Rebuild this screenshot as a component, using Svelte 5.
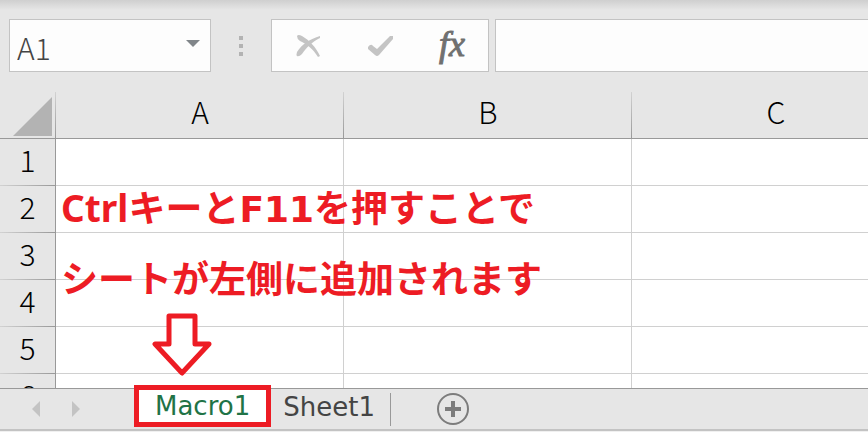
<script>
  const columns = ['A', 'B', 'C'];
  const rows = [1, 2, 3, 4, 5, 6];

  let cell = $state('A1');
  let formula = $state('');
  let active = $state('Macro1');
</script>

<main class="workbook">
  <header class="formula-bar">
    <div class="name-box">
      <input type="text" aria-label="Name box" bind:value={cell} />
      <button type="button" class="drop" aria-label="Open name list">
        <svg width="14" height="7" viewBox="0 0 14 7"><path d="M0 0h14L7 7z" fill="#808589" /></svg>
      </button>
    </div>
    <div class="grip" aria-hidden="true"><i></i><i></i><i></i></div>
    <div class="actions">
      <button type="button" aria-label="Cancel">
        <svg width="26" height="24" viewBox="0 0 26 24">
          <path d="M2 2Q2 5 5 7C12 10 18 15 23 23L25 22C21 13 14 6 7 2Q3 0 2 2z" fill="#c4c4c4" />
          <path d="M2 18C7 10 15 5 25 2L25 4C17 8 11 14 7 20Q4 23 2 22Q1 21 2 18z" fill="#c4c4c4" />
        </svg>
      </button>
      <button type="button" aria-label="Enter">
        <svg width="26" height="24" viewBox="0 0 26 24">
          <path d="M1 13Q4 9 6 12L10 15L23 2L26 2L26 5L12 21Q10 23 8 21L1 15z" fill="#c4c4c4" />
        </svg>
      </button>
      <button type="button" class="fx" aria-label="Insert function">fx</button>
    </div>
    <input class="formula" type="text" aria-label="Formula" bind:value={formula} />
  </header>

  <section class="sheet">
    <table>
      <thead>
        <tr>
          <th class="corner" aria-label="Select all">
            <svg width="39" height="39" viewBox="0 0 39 39"><path d="M39 0v39H0z" fill="#b3b3b3" /></svg>
          </th>
          {#each columns as column}
            <th scope="col">{column}</th>
          {/each}
        </tr>
      </thead>
      <tbody>
        {#each rows as row}
          <tr>
            <th scope="row">{row}</th>
            {#each columns as column}
              <td></td>
            {/each}
          </tr>
        {/each}
      </tbody>
    </table>

    <div class="note">
      <p>Ctrlキーと<span>F11</span>を押すことで</p>
      <p>シートが左側に追加されます</p>
      <svg width="60" height="64" viewBox="0 0 60 64" aria-hidden="true">
        <path d="M17 3H43V31H57L30 60L3 31H17z" fill="#fff" stroke="#ed1c24" stroke-width="5" stroke-linejoin="round" />
      </svg>
    </div>
  </section>

  <footer class="tabs">
    <div class="scroll">
      <button type="button" aria-label="Previous sheet">
        <svg width="8" height="16" viewBox="0 0 8 16"><path d="M8 0v16L0 8z" fill="#c3c3c3" /></svg>
      </button>
      <button type="button" aria-label="Next sheet">
        <svg width="8" height="16" viewBox="0 0 8 16"><path d="M0 0v16l8-8z" fill="#c3c3c3" /></svg>
      </button>
    </div>
    {#each ['Macro1', 'Sheet1'] as name}
      <button type="button" class="tab" class:active={active === name} onclick={() => (active = name)}>{name}</button>
    {/each}
    <button type="button" class="add" aria-label="New sheet">
      <svg width="34" height="34" viewBox="0 0 34 34">
        <circle cx="17" cy="17" r="15" fill="none" stroke="#7c7c7c" stroke-width="2" />
        <path d="M17 9v16M9 17h16" stroke="#7c7c7c" stroke-width="4" />
      </svg>
    </button>
  </footer>
</main>

<style>
  :global(body) { margin: 0; }
  .workbook { display: flex; flex-direction: column; height: 100vh; overflow: hidden; box-sizing: border-box; background: #e6e6e6; color: #000; font-family: "Noto Sans CJK JP", sans-serif; }
  button { display: flex; align-items: center; justify-content: center; margin: 0; padding: 0; border: 0; background: none; color: inherit; font: inherit; }
  input { min-width: 0; box-sizing: border-box; border: 0; border-radius: 0; background: none; font: inherit; color: #444; outline: 0; }
  svg { display: block; }

  .formula-bar { display: flex; flex: none; height: 80px; box-sizing: border-box; padding: 19px 0 8px 9px; background: linear-gradient(#cfcfcf, #e6e6e6 10px); font-size: 30px; font-weight: 300; }
  .name-box, .actions, .formula { box-sizing: border-box; border: 1px solid #c3c3c3; background: #fdfdfd; }
  .name-box { display: flex; width: 202px; }
  .name-box input { flex: 1; padding: 2px 0 0 7px; }
  .drop { width: 35px; padding-bottom: 4px; }
  .grip { display: flex; flex-direction: column; align-items: center; justify-content: center; gap: 4px; width: 60px; }
  .grip i { width: 4px; height: 4px; background: #b3b3b3; }
  .actions { display: flex; width: 218px; margin-right: 6px; }
  .actions button { flex: 1; }
  .actions .fx { padding-bottom: 4px; color: #707070; font: italic 36px "Liberation Serif", serif; -webkit-text-stroke: 1px #707070; }
  .formula { flex: 1; border-right: 0; padding: 0 8px; }

  .sheet { position: relative; flex: 1; min-height: 0; padding-top: 12px; overflow: hidden; border-bottom: 1px solid #999; }
  table { width: 920px; border-collapse: separate; border-spacing: 0; table-layout: fixed; }
  th, td { box-sizing: border-box; height: 47px; padding: 0; border: solid #d0d0d0; border-width: 0 1px 1px 0; background: #fff; }
  th { width: 288px; padding-bottom: 8px; font-size: 30px; font-weight: 300; line-height: 36px; }
  thead th { border-bottom-color: #999; border-right: 0; background: linear-gradient(#d2d2d2, #999) right / 1px 100% no-repeat #e6e6e6; }
  tbody th { border-right-color: #999; border-bottom: 0; background: linear-gradient(90deg, #d2d2d2, #999) bottom / 100% 1px no-repeat #e6e6e6; }
  .corner { width: 56px; padding: 0; }
  .corner svg { margin: 2px 0 0 13px; }

  .note { position: absolute; top: 93px; left: 61px; color: #ed1c24; font: 700 37px/69px "Noto Sans", "Noto Sans CJK JP", sans-serif; white-space: nowrap; }
  .note p { margin: 0; }
  .note span { font-family: "DejaVu Sans", sans-serif; font-size: 36px; }
  .note svg { margin-left: 91px; }

  .tabs { display: flex; flex: none; align-items: center; height: 42px; box-sizing: border-box; margin-bottom: 1px; border-bottom: 2px solid #c3c3c3; box-shadow: 0 1px #f0f0f0; font: 26px "DejaVu Sans", sans-serif; }
  .scroll { display: flex; gap: 32px; padding: 0 54px 0 32px; }
  .tab { height: 33px; padding: 0 15px 4px 12px; border-right: 1px solid #999; color: #444; }
  .tab.active { position: relative; z-index: 1; height: 42px; margin-top: -6px; padding: 0 16px; border: 5px solid #ed1c24; background: #fff; color: #217346; }
  .add { margin-left: 45px; }
</style>
